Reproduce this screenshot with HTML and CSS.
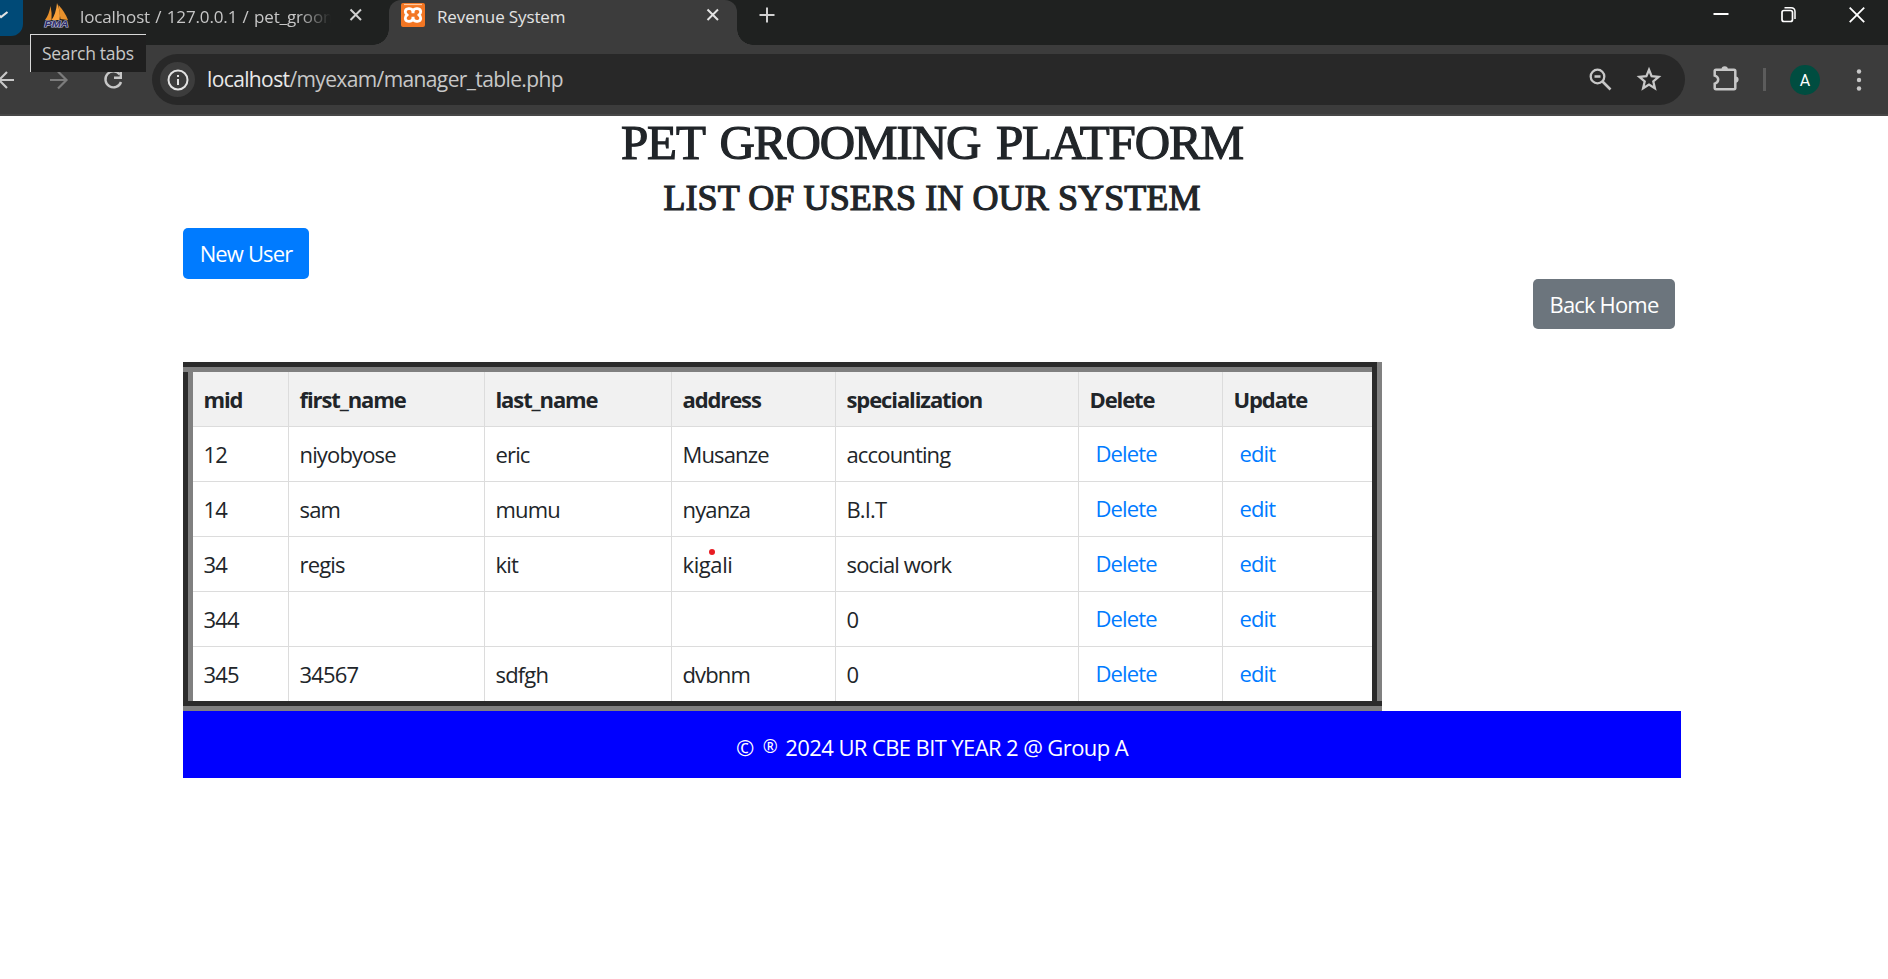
FILE: index.html
```html
<!DOCTYPE html>
<html lang="en">
<head>
<meta charset="utf-8">
<title>Revenue System</title>
<link rel="stylesheet" href="styles.css">
</head>
<body>
<header class="browser">
  <div class="tabstrip">
    <div class="tabsearch"><svg width="24" height="36" viewBox="0 0 24 36"><path d="M-4 13l5 4 6.500-5" fill="none" stroke="#e3e3e3" stroke-width="2.200"/></svg></div>
    <div class="tab tab-back">
      <svg class="pma" width="26" height="26" viewBox="0 0 26 26"><path d="M1 17Q5 12 6.500 3Q8 9 7.500 17Z" fill="#e8912c"/><path d="M7.500 17Q12 11 13 0Q17 9 15.500 17Z" fill="#f9a13a"/><path d="M16.500 16Q15.500 10 14.500 2Q21 9 24 17Z" fill="#e8912c"/><text x="0.500" y="24" textLength="24" lengthAdjust="spacingAndGlyphs" class="pma-text">PMA</text></svg>
      <span class="tab-title fade">localhost / 127.0.0.1 / pet_groom</span>
      <svg class="close" width="14" height="14" viewBox="0 0 14 14"><path d="M1.500 1.500l10.500 10.500M12 1.500L1.500 12" stroke="#d0d0d0" stroke-width="2"/></svg>
    </div>
    <div class="tab tab-front">
      <svg width="24" height="24" viewBox="0 0 24 24"><rect width="24" height="24" rx="2" fill="#f37623"/><path d="M3 1.500h18" stroke="#ffc79d" stroke-width="1.200"/><path d="M12 7.800C10.500 4.800 4.300 4.800 4.300 8.800Q4.300 11 6.300 12Q4.300 13 4.300 15.200C4.300 19.200 10.500 19.200 12 16.200C13.500 19.200 19.700 19.200 19.700 15.200Q19.700 13 17.700 12Q19.700 11 19.700 8.800C19.700 4.800 13.500 4.800 12 7.800Z" fill="none" stroke="#fff" stroke-width="2.800" stroke-linejoin="round"/><path d="M12 7v3.200M12 13.800V17" stroke="#fff" stroke-width="3"/></svg>
      <span class="tab-title">Revenue System</span>
      <svg class="close" width="14" height="14" viewBox="0 0 14 14"><path d="M1.500 1.500l10.500 10.500M12 1.500L1.500 12" stroke="#e3e3e3" stroke-width="2"/></svg>
    </div>
    <svg class="plus" width="16" height="16" viewBox="0 0 16 16"><path d="M8 .5v15M.5 8h15" stroke="#d0d0d0" stroke-width="2"/></svg>
    <div class="window-controls">
      <svg width="16" height="18" viewBox="0 0 16 18"><path d="M.5 8h15" stroke="#fff" stroke-width="2"/></svg>
      <svg width="16" height="18" viewBox="0 0 16 18"><rect x="1" y="4.500" width="10.500" height="11" rx="2" fill="none" stroke="#fff" stroke-width="1.700"/><path d="M3.500 1.700h6.500q4 0 4 4V13" fill="none" stroke="#fff" stroke-width="1.500"/></svg>
      <svg width="16" height="18" viewBox="0 0 16 18"><path d="M.7 1.700l14.500 14.500M15.200 1.700L.7 16.200" stroke="#fff" stroke-width="1.800"/></svg>
    </div>
  </div>
  <div class="toolbar">
    <svg class="back" width="16" height="20" viewBox="0 0 16 20"><path d="M-2 10h16M7 2l-8 8 8 8" fill="none" stroke="#c7c7c7" stroke-width="2.200"/></svg>
    <svg class="forward" width="20" height="20" viewBox="0 0 20 20"><path d="M0 10h16M8 1.500l8.500 8.500L8 18.500" fill="none" stroke="#7c7c7c" stroke-width="2.200"/></svg>
    <svg class="reload" width="20" height="20" viewBox="0 0 20 20"><path d="M16.800 4.500A8 8 0 1 0 18 12" fill="none" stroke="#c7c7c7" stroke-width="2.400"/><path d="M19 1v8h-8V6.600h5.600V1z" fill="#c7c7c7"/></svg>
    <div class="omnibox">
      <span class="info"><svg width="22" height="22" viewBox="0 0 22 22"><circle cx="11" cy="11" r="9.500" fill="none" stroke="#e3e3e3" stroke-width="2"/><path d="M11 10v6M11 6v2" stroke="#e3e3e3" stroke-width="2"/></svg></span>
      <span class="url"><b>localhost</b>/myexam/manager_table.php</span>
      <svg class="zoom" width="24" height="24" viewBox="0 0 24 24"><circle cx="9.500" cy="8.500" r="6.800" fill="none" stroke="#c7c7c7" stroke-width="2.300"/><path d="M6.500 8.500h6M14.500 13.500l8 8" stroke="#c7c7c7" stroke-width="2.600"/></svg>
      <svg class="star" width="24" height="24" viewBox="0 0 24 24"><path d="M12 2.800l2.600 6.400 7 .6-5.300 4.600 1.600 6.900-5.900-3.700-5.900 3.700 1.600-6.900L2.400 9.800l7-.6z" fill="none" stroke="#c7c7c7" stroke-width="2.300"/></svg>
    </div>
    <svg class="puzzle" width="26" height="26" viewBox="0 0 26 26"><path d="M3 3.800h18q1.300 0 1.300 1.300v17q0 1.200-1.300 1.200H3q-1.300 0-1.300-1.200v-4.500q3.500-1 3.500-4t-3.500-4v-4.500q0-1.300 1.300-1.300z" fill="none" stroke="#c7c7c7" stroke-width="2.500"/><path d="M8.500 3.500a3.200 3.200 0 0 1 6.400 0zM22.500 10.500a3.100 3.100 0 0 1 0 6.200z" fill="#c7c7c7"/></svg>
    <i class="divider"></i>
    <span class="avatar">A</span>
    <svg class="dots" width="6" height="24" viewBox="0 0 6 24" fill="#c7c7c7"><circle cx="3" cy="3.500" r="2.200"/><circle cx="3" cy="12" r="2.200"/><circle cx="3" cy="20.500" r="2.200"/></svg>
  </div>
  <div class="tooltip">Search tabs</div>
</header>
<main class="container">
  <h1>PET GROOMING PLATFORM</h1>
  <h2>LIST OF USERS IN OUR SYSTEM</h2>
  <a class="btn primary">New User</a>
  <a class="btn secondary">Back Home</a>
  <div class="frame">
    <table>
      <colgroup><col class="c1"><col class="c2"><col class="c3"><col class="c4"><col class="c5"><col class="c6"><col class="c7"></colgroup>
      <tr><th>mid</th><th>first_name</th><th>last_name</th><th>address</th><th>specialization</th><th>Delete</th><th>Update</th></tr>
      <tr><td>12</td><td>niyobyose</td><td>eric</td><td>Musanze</td><td>accounting</td><td><a>Delete</a></td><td><a>edit</a></td></tr>
      <tr><td>14</td><td>sam</td><td>mumu</td><td>nyanza</td><td>B.I.T</td><td><a>Delete</a></td><td><a>edit</a></td></tr>
      <tr><td>34</td><td>regis</td><td>kit</td><td class="marked"><span class="city">kigali</span><i class="pointer"></i></td><td>social work</td><td><a>Delete</a></td><td><a>edit</a></td></tr>
      <tr><td>344</td><td></td><td></td><td></td><td>0</td><td><a>Delete</a></td><td><a>edit</a></td></tr>
      <tr><td>345</td><td>34567</td><td>sdfgh</td><td>dvbnm</td><td>0</td><td><a>Delete</a></td><td><a>edit</a></td></tr>
    </table>
  </div>
  <footer>© <span class="reg">®</span> 2024 UR CBE BIT YEAR 2 @ Group A</footer>
</main>
</body>
</html>
```
FILE: styles.css
```css
* { box-sizing: border-box; }
body { margin: 0; background: #fff; color: #212529; font: 22px "Open Sans", sans-serif; letter-spacing: -0.85px; height: 979px; overflow: hidden; }
svg { display: block; flex: none; overflow: visible; }
.browser { position: relative; height: 116px; background: #3c3c3c; border-bottom: 2px solid #474747; overflow: hidden; }
.tabstrip { height: 45px; background: #1f2120; display: flex; }
.tabsearch { width: 23px; height: 36px; background: #004a77; border-radius: 0 0 12px 0; overflow: hidden; }
.tab { display: flex; align-items: flex-start; font-size: 17px; color: #c7c7c7; letter-spacing: -0.13px; }
.tab-title { line-height: 24px; padding-top: 2px; white-space: nowrap; }
.tab-back { width: 366px; padding: 3px 26px 0 21px; }
.tab-back .tab-title { margin-left: 10px; width: 251px; overflow: hidden; word-spacing: 1px; }
.fade { mask-image: linear-gradient(90deg, #000 87%, transparent 100%); }
.pma-text { font: italic bold 9px "Liberation Sans", sans-serif; fill: #2c2c6c; stroke: #b9b9d0; stroke-width: 1.2px; paint-order: stroke; letter-spacing: 0; }
.tab .close { margin-left: auto; margin-top: 5px; }
.tab-front { width: 348px; height: 45px; background: #3c3c3c; padding: 3px 17px 0 12px; border-radius: 12px 12px 0 0; color: #e3e3e3; position: relative; }
.tab-front::before, .tab-front::after { content: ""; position: absolute; bottom: 0; width: 16px; height: 16px; }
.tab-front::before { left: -16px; background: radial-gradient(circle at 0 0, transparent 15.5px, #3c3c3c 16px); }
.tab-front::after { right: -16px; background: radial-gradient(circle at 100% 0, transparent 15.5px, #3c3c3c 16px); }
.tab-front .tab-title { margin-left: 12px; }
.plus { margin: 7px 0 0 22px; }
.window-controls { margin-left: auto; display: flex; gap: 52px; padding: 6px 23px 0 0; }
.toolbar { height: 69px; display: flex; align-items: center; border-top-right-radius: 12px; }
.forward { margin-left: 34px; }
.reload { margin-left: 33px; }
.omnibox { margin-left: 29px; width: 1533px; height: 51px; border-radius: 26px; background: #282828; display: flex; align-items: center; }
.info { width: 35px; height: 35px; border-radius: 50%; background: #3c3c3c; display: grid; place-items: center; margin-left: 8px; }
.url { margin-left: 12px; font-size: 21px; color: #c7c7c7; letter-spacing: -0.62px; padding-bottom: 1px; }
.url b { font-weight: 400; color: #e8e8e8; }
.zoom { margin-left: auto; }
.star { margin: 0 24px 1px 25px; }
.puzzle { margin: 0 0 1px 28px; }
.divider { width: 3px; height: 23px; background: #5c5c5c; margin-left: 24px; }
.avatar { width: 30px; height: 30px; margin-left: 24px; border-radius: 50%; background: #004d40; color: #fff; font: 16px/31px Roboto, sans-serif; text-align: center; letter-spacing: 0; }
.dots { margin-left: 36px; }
.tooltip { position: absolute; left: 30px; top: 34px; width: 116px; height: 38px; background: #1f1f1f; border: solid #d8d8d8; border-width: 1px 0 0 1px; color: #c7c7c7; font-size: 17.500px; line-height: 37px; padding-left: 11px; letter-spacing: -0.3px; }
.container { width: 1498px; margin-left: 183px; display: flex; flex-direction: column; align-items: flex-start; }
h1, h2 { align-self: stretch; margin: 0; text-align: center; font-family: "Liberation Serif", serif; font-weight: 400; white-space: nowrap; -webkit-text-stroke: 1.2px #212529; }
h1 { height: 59px; font-size: 49px; line-height: 54px; letter-spacing: -1.1px; word-spacing: 4.5px; }
h2 { height: 53px; font-size: 36px; line-height: 47px; letter-spacing: .1px; }
.btn { height: 51px; line-height: 51px; border-radius: 5px; color: #fff; text-align: center; }
.primary { width: 126px; background: #007bff; }
.secondary { width: 142px; height: 50px; background: #6c757d; margin: 0 6px 0 auto; }
.frame { width: 1199px; height: 349px; margin-top: 33px; padding: 10px;
  background:
    linear-gradient(#2b2b2b, #2b2b2b) 0 339px / 1199px 5px no-repeat,
    linear-gradient(#808080, #808080) 0 344px / 1199px 5px no-repeat,
    linear-gradient(#808080, #808080) 1194px 0 / 5px 339px no-repeat,
    linear-gradient(#2b2b2b, #2b2b2b) 1189px 0 / 5px 339px no-repeat,
    linear-gradient(#2b2b2b, #2b2b2b) 0 0 / 1189px 5px no-repeat,
    linear-gradient(#808080, #808080) 0 5px / 1189px 5px no-repeat,
    linear-gradient(90deg, #2b2b2b 5px, #808080 5px) 0 10px / 10px 329px no-repeat; }
table { width: 1179px; table-layout: fixed; border-collapse: separate; border-spacing: 0; background: #fff; }
.c1 { width: 96px; } .c2 { width: 196px; } .c3 { width: 187px; } .c4 { width: 164px; } .c5 { width: 243px; } .c6 { width: 144px; } .c7 { width: 149px; }
th, td { height: 55px; padding: 0 0 1px 10.5px; border: solid #dcdcdc; border-width: 0 1px 1px 0; text-align: left; line-height: 30px; white-space: nowrap; }
th { background: #f1f1f1; letter-spacing: -1.1px; }
th:last-child, td:last-child { border-right: 0; }
tr:last-child td { height: 54px; border-bottom: 0; }
td a { position: relative; top: -1px; padding-left: 6px; color: #007bff; }
.marked { position: relative; }
.city { letter-spacing: -.4px; }
.pointer { position: absolute; left: 37px; top: 12px; width: 6px; height: 6px; border-radius: 50%; background: #e81c23; }
footer { width: 1498px; height: 67px; background: #00f; color: #fff; text-align: center; line-height: 73px; letter-spacing: -.6px; }
.reg { font-size: 18px; position: relative; top: -3px; margin: 0 3px 0 4px; }
```
